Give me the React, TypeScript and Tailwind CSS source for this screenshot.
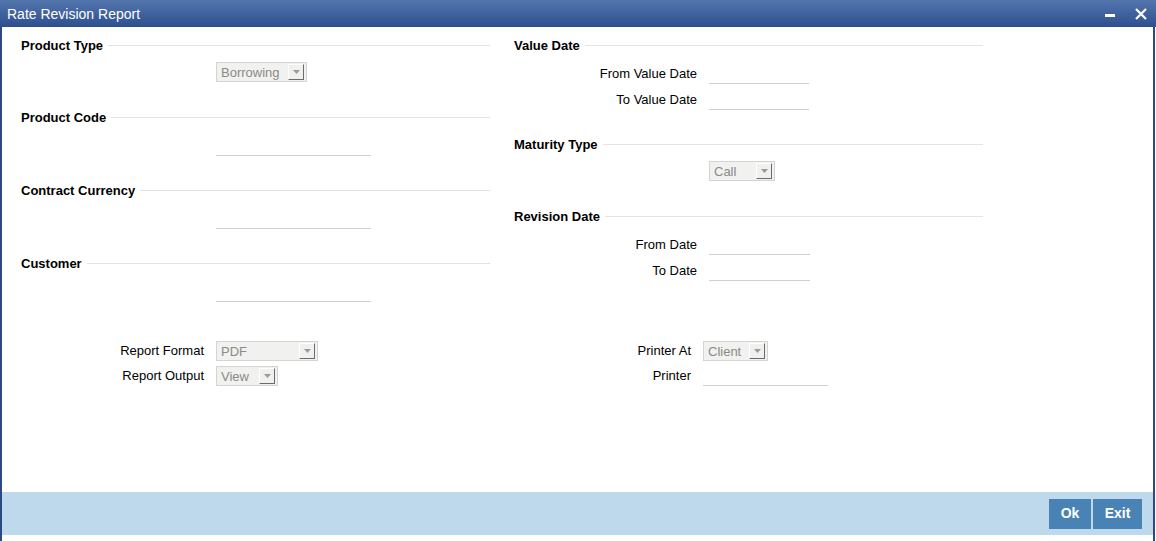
import React from 'react';

const font = { fontFamily: '"Liberation Sans", Arial, sans-serif' };

const SectionHeader: React.FC<{ title: string }> = ({ title }) => (
  <div className="flex items-center h-[16px]">
    <span className="text-[13px] font-bold text-black leading-[16px] whitespace-nowrap pt-[2px]">{title}</span>
    <div className="flex-1 h-px bg-[#e3e3e3] ml-[5px]" />
  </div>
);

const SelectBox: React.FC<{ value: string; width: string }> = ({ value, width }) => (
  <div className={`${width} h-[20px] border border-[#d4d4d4] bg-[#f1f1ef] flex items-center justify-between pl-[4px] pr-[2px]`}>
    <span className="text-[13px] text-[#8a8a8a] leading-none">{value}</span>
    <div className="w-[16px] h-[16px] bg-[#f0f0ee] border-t border-l border-t-white border-l-white border-r border-b border-r-[#6b6b6b] border-b-[#6b6b6b] flex items-center justify-center">
      <svg width="7" height="4" viewBox="0 0 7 4">
        <path d="M0 0 H7 L3.5 4 Z" fill="#9a9a9a" />
      </svg>
    </div>
  </div>
);

const LineInput: React.FC<{ width: string }> = ({ width }) => (
  <div className={`${width} h-[20px] border-b border-[#cfcfcf]`} />
);

const LabeledRow: React.FC<{ label: string; labelWidth: string; children: React.ReactNode }> = ({
  label,
  labelWidth,
  children,
}) => (
  <div className="flex items-center h-[20px]">
    <span className={`${labelWidth} text-right text-[13px] text-black leading-none pb-[2px]`}>{label}</span>
    <div className="ml-[12px]">{children}</div>
  </div>
);

export default function App() {
  return (
    <div className="w-[1156px] h-[541px] bg-white flex flex-col overflow-hidden" style={font}>
      {/* title bar */}
      <div className="h-[27px] bg-gradient-to-b from-[#5476ae] to-[#2d4f8f] flex items-center justify-between pl-[7px] pr-[9px]">
        <span className="text-white text-[14px] leading-none">Rate Revision Report</span>
        <div className="flex items-center gap-[20px]">
          <div className="w-[10px] h-[3px] bg-white mt-[3px]" />
          <svg width="12" height="12" viewBox="0 0 12 12">
            <path d="M1 1 L11 11 M11 1 L1 11" stroke="white" strokeWidth="2.2" />
          </svg>
        </div>
      </div>

      <div className="flex-1 flex flex-col border-l-2 border-r-2 border-[#2b4a82] mr-[1px]">
        <div className="flex-1 pl-[19px] pt-[10px]">
          <div className="flex gap-[24px]">
            {/* left column */}
            <div className="w-[469px] flex flex-col">
              <SectionHeader title="Product Type" />
              <div className="ml-[195px] mt-[9px]">
                <SelectBox value="Borrowing" width="w-[91px]" />
              </div>
              <div className="mt-[27px]">
                <SectionHeader title="Product Code" />
              </div>
              <div className="ml-[195px] mt-[11px]">
                <LineInput width="w-[155px]" />
              </div>
              <div className="mt-[26px]">
                <SectionHeader title="Contract Currency" />
              </div>
              <div className="ml-[195px] mt-[11px]">
                <LineInput width="w-[155px]" />
              </div>
              <div className="mt-[26px]">
                <SectionHeader title="Customer" />
              </div>
              <div className="ml-[195px] mt-[11px]">
                <LineInput width="w-[155px]" />
              </div>
            </div>

            {/* right column */}
            <div className="w-[469px] flex flex-col">
              <SectionHeader title="Value Date" />
              <div className="mt-[11px] flex flex-col gap-[6px]">
                <LabeledRow label="From Value Date" labelWidth="w-[183px]">
                  <LineInput width="w-[100px]" />
                </LabeledRow>
                <LabeledRow label="To Value Date" labelWidth="w-[183px]">
                  <LineInput width="w-[100px]" />
                </LabeledRow>
              </div>
              <div className="mt-[26px]">
                <SectionHeader title="Maturity Type" />
              </div>
              <div className="ml-[195px] mt-[9px]">
                <SelectBox value="Call" width="w-[66px]" />
              </div>
              <div className="mt-[27px]">
                <SectionHeader title="Revision Date" />
              </div>
              <div className="mt-[11px] flex flex-col gap-[6px]">
                <LabeledRow label="From Date" labelWidth="w-[183px]">
                  <LineInput width="w-[101px]" />
                </LabeledRow>
                <LabeledRow label="To Date" labelWidth="w-[183px]">
                  <LineInput width="w-[101px]" />
                </LabeledRow>
              </div>
            </div>
          </div>

          {/* report options */}
          <div className="flex gap-[24px] mt-[39px]">
            <div className="w-[469px] flex flex-col gap-[5px]">
              <LabeledRow label="Report Format" labelWidth="w-[183px]">
                <SelectBox value="PDF" width="w-[102px]" />
              </LabeledRow>
              <LabeledRow label="Report Output" labelWidth="w-[183px]">
                <SelectBox value="View" width="w-[62px]" />
              </LabeledRow>
            </div>
            <div className="w-[469px] flex flex-col gap-[5px]">
              <LabeledRow label="Printer At" labelWidth="w-[177px]">
                <SelectBox value="Client" width="w-[65px]" />
              </LabeledRow>
              <LabeledRow label="Printer" labelWidth="w-[177px]">
                <LineInput width="w-[125px]" />
              </LabeledRow>
            </div>
          </div>
        </div>

        {/* footer */}
        <div className="h-[43px] bg-[#bed9ec] flex items-center justify-end pr-[11px] gap-[2px]">
          <button className="w-[42px] h-[30px] bg-[#4982b4] text-white text-[14px] font-bold">Ok</button>
          <button className="w-[49px] h-[30px] bg-[#4982b4] text-white text-[14px] font-bold">Exit</button>
        </div>
        <div className="h-[6px]" />
      </div>
    </div>
  );
}
